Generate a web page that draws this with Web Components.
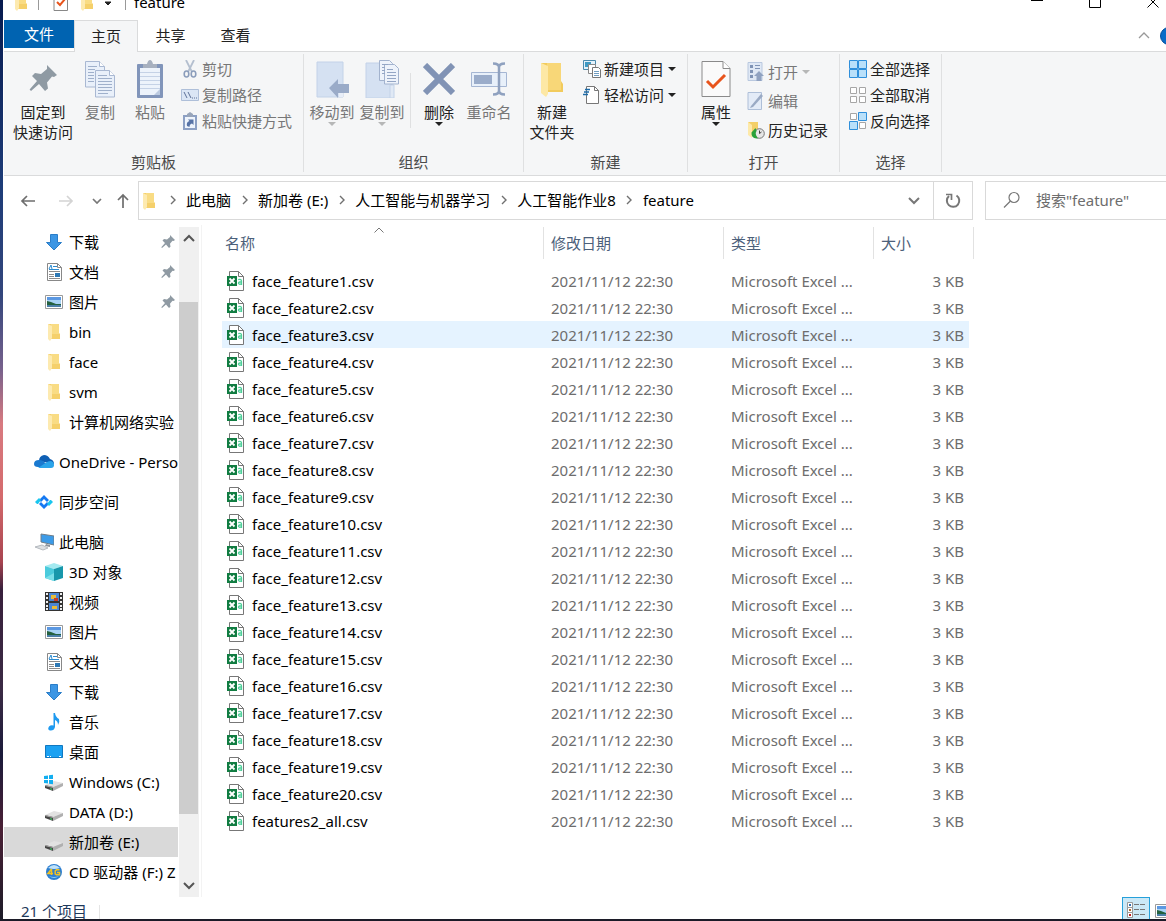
<!DOCTYPE html>
<html lang="zh-CN">
<head>
<meta charset="utf-8">
<title>feature</title>
<style>
  body {
    margin: 0;
    background: white;
    color: black;
    font-family: "Noto Sans", "Noto Sans CJK SC", sans-serif;
    font-size: 15px;
    line-height: 20px;
  }
</style>
</head>
<body>
<explorer-window></explorer-window>

<script>
  // name: [width, height, svg content]
  const folderShape = '<path d="M2 1h11v9l1 1v5H4z" fill="#f5d06b"/><path d="M5 1h8v10H5z" fill="#f9dc84"/><path d="M2 1l4 2v12l-2 3-2-2z" fill="#fdeab0"/>';
  const pinShape = '<path d="M9 0l5 5-1.500 1-1-.3-2.500 3 .5 3L8 13 5 9.500 1 13l-.7-.7L4 8 1.500 5.500 3 4l3 .5L9 2z" fill="#8f9aa3"/>';
  const driveShape = '<path d="M1 13l9-4 9 2-10 4z" fill="#e2e2e2"/><path d="M1 13l8 2v4l-8-3z" fill="#454545"/><path d="M9 15l10-4v3L9 19z" fill="#b0b0b0"/><path d="M1 13l8 2v1l-8-2z" fill="#aaa"/><path d="M6 16l2 .5V18l-2-.5z" fill="#3fae5a"/>';
  const pictureShape = '<path d="M1.500 3.500h17v13h-17z" fill="#fff" stroke="#9a9a9a"/><path d="M3 5h14v10H3z" fill="#a9d3f5"/><path d="M3 5h14v3H3z" fill="#5b98e2"/><path d="M3 9l4 1 5 2h5v1H3z" fill="#24613f"/><path d="M3 13h14v2H3z" fill="#4b7fa8"/>';
  const icons = {
    folder: [16, 18, folderShape],
    pin: [14, 14, pinShape],
    bigpin: [28, 28, `<g transform="scale(2)">${pinShape}</g>`],
    props: [16, 18, '<path d="M1 .500h13.500v17H1z" fill="#fff" stroke="#888"/><path d="M4 9l3 3 5-6" fill="none" stroke="#e8541c" stroke-width="2"/>'],
    down: [8, 8, '<path d="M1 1h6M1 4h6L4 7z" stroke="#222" fill="#222"/>'],
    min: [12, 4, '<path d="M0 0h12v1H0z"/>'],
    max: [12, 12, '<path d="M.5.5h11v11H.5z" fill="none" stroke="#000"/>'],
    close: [12, 12, '<path d="M.5.5l11 11M11.500.5l-11 11" stroke="#000"/>'],
    collapse: [12, 7, '<path d="M1 6l5-5 5 5" fill="none" stroke="#999" stroke-width="1.300"/>'],
    help: [18, 18, '<circle cx="9" cy="9" r="8.500" fill="#0a6cc8" stroke="#064f9c"/><path d="M7 7q0-2 2-2t2 2-2 3M9 12v1.500" stroke="#fff" fill="none"/>'],
    copy: [32, 38, '<g fill="#e9f0fa" stroke="#a9b8d2"><path d="M1.500 1.500h14l5 5V27h-19z"/><path d="M11.500 10.500h14l5 5V37h-19z"/><path d="M15.500 1.500v5h5M25.500 10.500v5h5" fill="#fff"/></g><path d="M4 6.500h9M4 9.500h7M4 12.500h6M4 15.500h6M4 18.500h6M4 21.500h6M14 15.500h9M14 18.500h14M14 21.500h14M14 24.500h14M14 27.500h14M14 30.500h14M14 33.500h10" stroke="#9fb0cb"/>'],
    paste: [28, 38, '<rect x="1" y="4" width="26" height="34" rx="1" fill="#8195ba"/><path d="M4 8h20v27H4z" fill="#edf3fb"/><path d="M4 12.500h20M4 16.500h20M4 20.500h20M4 24.500h20M4 28.500h20" stroke="#c5d2e6"/><path d="M7 4h4q1-4 3-4t3 4h4v4H7z" fill="#a7b0bf"/><path d="M18 35l6-6v6z" fill="#bccae0"/>'],
    cut: [18, 18, '<path d="M5 0l6 12M13 0L7 12" stroke="#b4bfcf" stroke-width="1.800"/><g fill="none" stroke="#8b9dbb" stroke-width="1.600"><ellipse cx="5.500" cy="14" rx="2.300" ry="3"/><ellipse cx="12.500" cy="14" rx="2.300" ry="3"/></g>'],
    path: [18, 12, '<path d="M.5.5h17v11H.5z" fill="#dbe6f5" stroke="#aebfd9"/><path d="M3 3l3 6M7 3l3 6M11 9h1M13 9h1M15 9h1" stroke="#5d7197"/>'],
    shortcut: [16, 18, '<path d="M1 3h14v15H1z" fill="#8ca0c4"/><path d="M3 5h10v11H3z" fill="#eef4fc"/><path d="M5 2l3-2 3 2v3H5z" fill="#98a5ba"/><path d="M5 14q-1-4 2.500-5L6 7.500h5.500V13L10 11.500Q7.500 12 7.500 15z" fill="#5773a6"/>'],
    moveto: [34, 38, '<path d="M2 2h26v35H2z" fill="#d5e1f2" stroke="#c3d2e8"/><path d="M24 24h4v13h-4z" fill="#e8eef8"/><path d="M14 28l9-9v5h11v9H23v5z" fill="#9aabc8"/>'],
    copyto: [36, 38, '<path d="M2 3h26v35H2z" fill="#d5e1f2" stroke="#c3d2e8"/><path d="M26 25h4v13h-4z" fill="#e0e9f5" stroke="#c3d2e8"/><g fill="#eef3fb" stroke="#a3b3ce"><path d="M15.500.5h10l3 3v17h-13z"/><path d="M20.500 4.500h10l4 4V24h-14z"/></g><path d="M18 4.500h6M18 7.500h3M18 10.500h3M18 13.500h3M23 9.500h6M23 12.500h9M23 15.500h9M23 18.500h9M23 21.500h9" stroke="#94a6c5"/>'],
    delete: [32, 32, '<path d="M2 2l28 28M30 2L2 30" stroke="#8193b5" stroke-width="6"/>'],
    rename: [36, 34, '<path d="M.5 10.500h35v14H.5z" fill="#e8f0fa" stroke="#a5b6d3"/><path d="M3 13h18v9H3z" fill="#9aacca"/><path d="M22 1.500q6 0 6 4v23q0 4-6 4M34 1.500q-6 0-6 4v23q0 4 6 4" fill="none" stroke="#8fa1bf" stroke-width="2.500"/>'],
    newfolder: [26, 38, '<path d="M2 3h20v18l2 3v8H8z" fill="#f2cb5c"/><path d="M8 3h14v27H8z" fill="#f8d778"/><path d="M2 3l7 3v28l-2 3-5-4z" fill="#fde8a5"/>'],
    newitem: [18, 18, '<path d="M.5.5h12v9H.5z" fill="#e4f2fb" stroke="#4b8aad"/><path d="M2 2h6v5H2z" fill="#3f9ac4"/><path d="M5.500 4.500h7v9h-7z" fill="#fff" stroke="#888"/><path d="M9.500 7.500h6l2 2v8h-8z" fill="#fff" stroke="#777"/><path d="M11 11.500h5M11 13.500h5M11 15.500h5" stroke="#6f9cc0"/>'],
    easy: [18, 18, '<path d="M3.500.5h8l4 4v13h-12z" fill="#fff" stroke="#777"/><path d="M11.500.5v4h4" fill="none" stroke="#777"/><path d="M2 3.500h5M1 6h5M0 8.500h5" stroke="#1d6ba8" stroke-width="1.400"/>'],
    bigprops: [30, 38, '<path d="M1 1.500h21l7 7v28H1z" fill="#fafafa" stroke="#8a8a8a"/><path d="M22 1.500v7h7" fill="#fff" stroke="#8a8a8a"/><path d="M6 21l6 6 12-12" fill="none" stroke="#e8541c" stroke-width="3"/>'],
    open: [18, 20, '<path d="M1 .500h14v18H1z" fill="#dfe8f5" stroke="#b9c8df"/><path d="M3 3h3v3H3zM3 8h3v3H3zM3 13h3v3H3zM8 3h5v1H8zM8 6h5v1H8z" fill="#7f93b5"/><path d="M12 9l5 5h-2.500v5h-5v-5H7z" fill="#90a2c1"/>'],
    edit: [18, 18, '<path d="M1 .500h13.500v17H1z" fill="#e3ebf7" stroke="#aebfd8"/><path d="M4 14L14 2l2 2L6 15l-3 1z" fill="#9aaac4"/>'],
    history: [18, 18, '<path d="M1 1h10v13H4z" fill="#f3cf68"/><path d="M1 1l4 3v13l-4-3z" fill="#fde9a9"/><circle cx="12.500" cy="12.500" r="4.800" fill="#e6e6e6" stroke="#777"/><path d="M12.500 9.500v3l2-1.500" stroke="#444" fill="none"/><path d="M9.500 17.500q-5.500-.5-5-6l4-4.500 1 3q-1.500 2-.5 4t2 3.500z" fill="#2aa23a"/>'],
    selall: [18, 18, '<g fill="#b9e0fa" stroke="#2f8fdb"><path d="M.5.5h8v8h-8zM9.500.5h8v8h-8zM.5 9.500h8v8h-8zM9.500 9.500h8v8h-8z"/></g>'],
    selnone: [18, 18, '<g fill="#fff" stroke="#a6a6a6"><path d="M1.500 1.500h6v6h-6zM10.500 1.500h6v6h-6zM1.500 10.500h6v6h-6zM10.500 10.500h6v6h-6z"/></g>'],
    selinv: [18, 18, '<g fill="#fff" stroke="#a6a6a6"><path d="M1.500 1.500h6v6h-6zM10.500 10.500h6v6h-6z"/></g><g fill="#b9e0fa" stroke="#2f8fdb"><path d="M9.500.5h8v8h-8zM.5 9.500h8v8h-8z"/></g>'],
    back: [16, 12, '<path d="M15 6H2M7 1L2 6l5 5" fill="none" stroke="#6e6e6e" stroke-width="1.700"/>'],
    forward: [16, 12, '<path d="M1 6h13M9 1l5 5-5 5" fill="none" stroke="#d4d4d4" stroke-width="1.700"/>'],
    recent: [10, 6, '<path d="M1 1l4 4 4-4" fill="none" stroke="#777" stroke-width="1.700"/>'],
    up: [14, 16, '<path d="M7 15V2M2 7l5-5 5 5" fill="none" stroke="#6e6e6e" stroke-width="1.700"/>'],
    crumb: [6, 10, '<path d="M1 1l4 4-4 4" fill="none" stroke="#707070" stroke-width="1.400"/>'],
    drop: [12, 8, '<path d="M1 1l5 5 5-5" fill="none" stroke="#777" stroke-width="2"/>'],
    refresh: [16, 16, '<path d="M11.500 2.500a6.200 6.200 0 1 1-7.500.5" fill="none" stroke="#777" stroke-width="2"/><path d="M1 1.500h5.500V7" fill="none" stroke="#777" stroke-width="1.700"/>'],
    search: [18, 18, '<circle cx="11" cy="6.500" r="5" fill="none" stroke="#777" stroke-width="1.200"/><path d="M7.500 10L1 16.500" stroke="#777" stroke-width="1.200"/>'],
    arrowup: [12, 8, '<path d="M1 7l5-5 5 5" fill="none" stroke="#555" stroke-width="2"/>'],
    arrowdown: [12, 8, '<path d="M1 1l5 5 5-5" fill="none" stroke="#555" stroke-width="2"/>'],
    sort: [10, 6, '<path d="M.5 5.500L5 1l4.500 4.500" fill="none" stroke="#777"/>'],
    download: [20, 20, '<path d="M6.500 2.500h7v8h4L10 18l-7.500-7.500h4z" fill="#3c96e4" stroke="#2a7dc8"/>'],
    doc: [20, 20, '<path d="M3.500 1.500h10l4 4v13h-14z" fill="#fff" stroke="#888"/><path d="M13.500 1.500v4h4" fill="none" stroke="#888"/><path d="M9 4.500h4M5 7.500h10" stroke="#2d8bd0"/><path d="M5 7l2-4 1 4" stroke="#2d8bd0" fill="none"/><path d="M5 9.500h11M5 12.500h5M5 14.500h5M5 16.500h11" stroke="#8a8a8a"/><path d="M11 11h5v4h-5z" fill="#2d78b4"/>'],
    picture: [20, 20, pictureShape],
    onedrive: [20, 20, '<path d="M5 9q0-5 5-6 4 0 6 4 4 1 4 5z" fill="#0f5fb4"/><path d="M0 12q0-4 5-4 2 0 4 1l7 6H4q-4 0-4-3z" fill="#1a79d0"/><path d="M4 16l9-6q2-1 4-1 3 1 3 4t-3 3z" fill="#2ba4ea"/>'],
    sync: [20, 20, '<path d="M5 8l5-5 5 5-2 2-3-3-3 3z" fill="#1579f2"/><path d="M15 12l-5 5-5-5 2-2 3 3 3-3z" fill="#1579f2"/><path d="M1 10l4-4 2 2-3 4H3zM19 10l-4 4-2-2 3-4h1z" fill="#1ac6ef"/>'],
    computer: [20, 20, '<path d="M7 2l13 2v9L7 10z" fill="#3c9be8" stroke="#6f7d88"/><path d="M12 12l4 1v2l-5-1z" fill="#8a929a"/><path d="M1 15l7-2 6 3-5 2z" fill="#dcdfe2" stroke="#b5babf"/>'],
    cube: [20, 20, '<path d="M10 1l9 3-9 3-9-3z" fill="#a4eaf0"/><path d="M1 4l9 3v12l-9-3z" fill="#4bcbdc"/><path d="M19 4l-9 3v12l9-3z" fill="#1797ab"/><path d="M1 16l9-5v8z" fill="#7bdfe9"/>'],
    video: [20, 20, '<path d="M1 0h18v19H1z" fill="#333"/><path d="M5 1h10v8H5zM5 11h10v7H5z" fill="#4b86d4"/><path d="M7 3h5v4H7zM8 14h5v3H8z" fill="#e8bb38"/><path d="M10 6h4v3h-4z" fill="#c43a2a"/><path d="M2 1h2v2H2zM2 5h2v2H2zM2 9h2v2H2zM2 13h2v2H2zM2 16h2v2H2zM16 1h2v2h-2zM16 5h2v2h-2zM16 9h2v2h-2zM16 13h2v2h-2zM16 16h2v2h-2z" fill="#eee"/>'],
    music: [20, 20, '<path d="M9.500 1h1.500q.5 4 4 6 1 3-1 6 0-4-3-5v7q-1 4-5 3.500-3-1-1-4 2-2 4.500-1z" fill="#1e9af0"/>'],
    desktop: [20, 20, '<path d="M1.500 3.500h17v12h-17z" fill="#1ba1f2" stroke="#1178c0"/><path d="M3 14.500h2M6 14.500h1M15 14.500h2" stroke="#fff"/>'],
    winDrive: [20, 20, `${driveShape}<path d="M0 4l4-.5V7H0zM5 3.300l4-.5V7H5zM0 8h4v3.500l-4-.5zM5 8h4v4.200l-4-.5z" fill="#12aef0"/>`],
    drive: [20, 20, driveShape],
    cd: [20, 20, '<circle cx="10" cy="10" r="8" fill="#2d7fd0"/><path d="M4 6q6-6 12 0-6 2-12 0z" fill="#bfe2fa"/><path d="M5 14q5 4 10 0-5 2-10 0z" fill="#8fd0f5"/><path d="M7.500 7L4 11.500h5M7.500 7v6M15.500 7.800h-3l-1.300 1v3l1.300 1h3v-2.300H13" stroke="#f4c220" stroke-width="1.500" fill="none"/>'],
    csv: [20, 20, '<path d="M3.500.5h9l5 5v14h-14z" fill="#fff" stroke="#777"/><path d="M12.500.5v5h5" fill="none" stroke="#777"/><path d="M1 5h10v10H1z" fill="#107c41"/><path d="M3.500 7.500l5 5M8.500 7.500l-5 5" stroke="#fff" stroke-width="1.800"/><path d="M12.200 8.700q3.300-1 3.300 1.300v4M15.500 11h-1.700q-1.500.2-1.300 1.500 1 1.500 3 0" fill="none" stroke="#4fd09a" stroke-width="1.300"/>'],
    details: [18, 18, '<path d="M.5.500h5v5h-5zM.5 5.500h5v5h-5zM.5 10.500h5v5h-5z" fill="#fff" stroke="#999"/><path d="M2 2h2v2H2z" fill="#3070b0"/><path d="M2 7h2v2H2z" fill="#b06a30"/><path d="M2 12h2v2H2z" fill="#c02020"/><path d="M7 2.500h5M13 2.500h5M7 7.500h5M13 7.500h5M7 12.500h5M13 12.500h5" stroke="#777"/>']
  };

  class UiIcon extends HTMLElement {
    constructor() {
      super();
      this.attachShadow({ mode: 'open' });
    }

    connectedCallback() {
      const [w, h, shape] = icons[this.getAttribute('name')];
      this.shadowRoot.innerHTML = `
        <style>
          :host { display: inline-flex; flex: none; align-items: center; justify-content: center; }
          svg { display: block; }
        </style>
        <svg width="${w}" height="${h}" viewBox="0 0 ${w} ${h}" aria-hidden="true">${shape}</svg>`;
    }
  }
  customElements.define('ui-icon', UiIcon);

  class TitleBar extends HTMLElement {
    constructor() {
      super();
      this.attachShadow({ mode: 'open' }).innerHTML = `
        <style>
          :host { display: flex; align-items: flex-end; height: 20px; overflow: hidden; }
          .bar { display: flex; flex: 1; align-items: center; height: 36px; }
          button { display: flex; justify-content: center; border: 0; padding: 0; background: none; }
          .folder { width: 34px; }
          .props { width: 44px; }
          .new { width: 8px; }
          .more { width: 34px; }
          i { width: 1px; height: 16px; background: #999; }
          .name { flex: 1; padding-left: 8px; line-height: 16px; }
          .controls { display: flex; align-items: center; gap: 46px; padding-right: 7px; }
        </style>
        <div class="bar">
          <ui-icon class="folder" name="folder"></ui-icon><i></i>
          <button class="props" aria-label="属性"><ui-icon name="props"></ui-icon></button>
          <button class="new" aria-label="新建文件夹"><ui-icon name="folder"></ui-icon></button>
          <button class="more" aria-label="自定义"><ui-icon name="down"></ui-icon></button><i></i>
          <span class="name">feature</span>
          <div class="controls">
            <button aria-label="最小化"><ui-icon name="min"></ui-icon></button>
            <button aria-label="最大化"><ui-icon name="max"></ui-icon></button>
            <button aria-label="关闭"><ui-icon name="close"></ui-icon></button>
          </div>
        </div>`;
    }
  }
  customElements.define('title-bar', TitleBar);

  class RibbonTabs extends HTMLElement {
    constructor() {
      super();
      this.attachShadow({ mode: 'open' }).innerHTML = `
        <style>
          :host { display: flex; height: 31px; border-bottom: 1px solid #dadbdc; }
          button { font: inherit; line-height: 20px; color: #222; border: 0; padding: 0 0 2px; background: none; width: 65px; }
          .file { width: 70px; height: 28px; padding: 0; background: #0063b1; color: white; }
          .active { background: #f5f6f7; border: 1px solid #dadbdc; border-bottom: 0; height: 32px; width: 64px; }
          .end { display: flex; flex: 1; justify-content: flex-end; align-items: center; gap: 10px; overflow: hidden; }
          .end button { display: flex; width: auto; padding: 0; }
          .end .help { margin-right: -12px; }
        </style>
        <button class="file">文件</button>
        <button class="active">主页</button>
        <button>共享</button>
        <button>查看</button>
        <div class="end">
          <button aria-label="折叠功能区"><ui-icon name="collapse"></ui-icon></button>
          <button class="help" aria-label="帮助"><ui-icon name="help"></ui-icon></button>
        </div>`;
    }
  }
  customElements.define('ribbon-tabs', RibbonTabs);

  class RibbonGroup extends HTMLElement {
    constructor() {
      super();
      this.attachShadow({ mode: 'open' }).innerHTML = `
        <style>
          :host { display: flex; flex-direction: column; margin: 2px 0 3px; border-right: 1px solid #dfe0e1; }
          .items { display: flex; flex: 1; padding: 0 9px 0 3px; }
          .label { text-align: center; color: #4a4a4a; }
        </style>
        <div class="items"><slot></slot></div>
        <div class="label">${this.getAttribute('label')}</div>`;
    }
  }

  // large button: icon above the label; attributes: icon, arrow, disabled
  class RibbonLarge extends HTMLElement {
    constructor() {
      super();
      const arrow = this.hasAttribute('arrow') ? '<div class="arrow"></div>' : '';
      this.attachShadow({ mode: 'open' }).innerHTML = `
        <style>
          :host { display: block; width: 50px; color: #222; }
          :host([wide]) { width: 64px; margin-left: 4px; }
          :host([disabled]) { color: #777; }
          button { display: flex; flex-direction: column; align-items: center; width: 100%; padding: 5px 0 0; border: 0; background: none; font: inherit; color: inherit; }
          ui-icon { height: 40px; margin-bottom: 3px; }
          span { white-space: nowrap; }
          .arrow { border: 4px solid transparent; border-top-color: currentColor; border-bottom: 0; }
          :host([disabled]) .arrow { opacity: .5; }
        </style>
        <button ${this.hasAttribute('disabled') ? 'disabled' : ''}>
          <ui-icon name="${this.getAttribute('icon')}"></ui-icon>
          <span><slot></slot></span>
          ${arrow}
        </button>`;
    }
  }

  class RibbonSmall extends HTMLElement {
    constructor() {
      super();
      const arrow = this.hasAttribute('arrow') ? '<i></i>' : '';
      this.attachShadow({ mode: 'open' }).innerHTML = `
        <style>
          :host { display: block; color: #222; }
          :host([disabled]) { color: #777; }
          button { display: flex; align-items: center; gap: 3px; height: 100%; padding: 0 2px 0 0; border: 0; background: none; font: inherit; color: inherit; white-space: nowrap; }
          ui-icon { width: 18px; }
          i { margin-left: 1px; border: 4px solid transparent; border-top-color: currentColor; border-bottom: 0; }
          :host([disabled]) i { opacity: .5; }
        </style>
        <button ${this.hasAttribute('disabled') ? 'disabled' : ''}>
          <ui-icon name="${this.getAttribute('icon')}"></ui-icon>
          <slot></slot>${arrow}
        </button>`;
    }
  }

  class RibbonColumn extends HTMLElement {
    constructor() {
      super();
      this.attachShadow({ mode: 'open' }).innerHTML = `
        <style>
          :host { display: grid; grid-auto-rows: 26px; align-content: start; padding: 2px 0 0 6px; }
          :host([spread]) { grid-auto-rows: 29px; padding-top: 3px; }
        </style>
        <slot></slot>`;
    }
  }
  customElements.define('ribbon-group', RibbonGroup);
  customElements.define('ribbon-large', RibbonLarge);
  customElements.define('ribbon-small', RibbonSmall);
  customElements.define('ribbon-column', RibbonColumn);

  class RibbonPanel extends HTMLElement {
    constructor() {
      super();
      this.attachShadow({ mode: 'open' }).innerHTML = `
        <style>
          :host { display: flex; height: 123px; background: #f5f6f7; border-bottom: 1px solid #dadbdc; }
          hr { width: 1px; height: 55px; margin: 19px 3px 0; border: 0; background: #dfe0e1; }
        </style>
        <ribbon-group label="剪贴板">
          <ribbon-large icon="bigpin" wide>固定到<br>快速访问</ribbon-large>
          <ribbon-large icon="copy" disabled>复制</ribbon-large>
          <ribbon-large icon="paste" disabled>粘贴</ribbon-large>
          <ribbon-column>
            <ribbon-small icon="cut" disabled>剪切</ribbon-small>
            <ribbon-small icon="path" disabled>复制路径</ribbon-small>
            <ribbon-small icon="shortcut" disabled>粘贴快捷方式</ribbon-small>
          </ribbon-column>
        </ribbon-group>
        <ribbon-group label="组织">
          <ribbon-large icon="moveto" arrow disabled>移动到</ribbon-large>
          <ribbon-large icon="copyto" arrow disabled>复制到</ribbon-large>
          <hr>
          <ribbon-large icon="delete" arrow>删除</ribbon-large>
          <ribbon-large icon="rename" disabled>重命名</ribbon-large>
        </ribbon-group>
        <ribbon-group label="新建">
          <ribbon-large icon="newfolder">新建<br>文件夹</ribbon-large>
          <ribbon-column>
            <ribbon-small icon="newitem" arrow>新建项目</ribbon-small>
            <ribbon-small icon="easy" arrow>轻松访问</ribbon-small>
          </ribbon-column>
        </ribbon-group>
        <ribbon-group label="打开">
          <ribbon-large icon="bigprops" arrow>属性</ribbon-large>
          <ribbon-column spread>
            <ribbon-small icon="open" arrow disabled>打开</ribbon-small>
            <ribbon-small icon="edit" disabled>编辑</ribbon-small>
            <ribbon-small icon="history">历史记录</ribbon-small>
          </ribbon-column>
        </ribbon-group>
        <ribbon-group label="选择">
          <ribbon-column>
            <ribbon-small icon="selall">全部选择</ribbon-small>
            <ribbon-small icon="selnone">全部取消</ribbon-small>
            <ribbon-small icon="selinv">反向选择</ribbon-small>
          </ribbon-column>
        </ribbon-group>`;
    }
  }
  customElements.define('ribbon-panel', RibbonPanel);

  class AddressBar extends HTMLElement {
    constructor() {
      super();
      const crumbs = ['此电脑', '新加卷 (E:)', '人工智能与机器学习', '人工智能作业8', 'feature'];
      this.attachShadow({ mode: 'open' }).innerHTML = `
        <style>
          :host { display: flex; padding: 5px 0 5px 7px; }
          button { display: flex; align-items: center; justify-content: center; border: 0; padding: 0; background: none; }
          .nav { display: grid; grid-template-columns: 34px 42px 20px 31px; }
          .box { display: flex; flex: 1; box-sizing: border-box; height: 39px; border: 1px solid #d9d9d9; }
          .box > ui-icon { width: 20px; }
          nav { display: flex; flex: 1; align-items: center; padding-bottom: 2px; }
          nav ui-icon { width: 27px; }
          a { color: inherit; text-decoration: none; white-space: nowrap; }
          .drop { width: 38px; }
          .refresh { width: 39px; border-left: 1px solid #d9d9d9; }
          label { display: flex; align-items: center; gap: 15px; box-sizing: border-box; width: 181px; margin-left: 12px; padding: 0 0 2px 17px; border: 1px solid #d9d9d9; border-right: 0; }
          input { flex: 1; min-width: 0; border: 0; padding: 0; background: none; font: inherit; outline: 0; }
          input::placeholder { color: #6d6d6d; opacity: 1; }
        </style>
        <div class="nav">
          <button aria-label="后退"><ui-icon name="back"></ui-icon></button>
          <button aria-label="前进" disabled><ui-icon name="forward"></ui-icon></button>
          <button aria-label="最近"><ui-icon name="recent"></ui-icon></button>
          <button aria-label="向上"><ui-icon name="up"></ui-icon></button>
        </div>
        <div class="box">
          <ui-icon name="folder"></ui-icon>
          <nav>${crumbs.map(c => `<ui-icon name="crumb"></ui-icon><a href="#">${c}</a>`).join('')}</nav>
          <button class="drop" aria-label="以前的位置"><ui-icon name="drop"></ui-icon></button>
          <button class="refresh" aria-label="刷新"><ui-icon name="refresh"></ui-icon></button>
        </div>
        <label aria-label="搜索"><ui-icon name="search"></ui-icon><input type="text" placeholder='搜索"feature"'></label>`;
    }
  }
  customElements.define('address-bar', AddressBar);

  class NavItem extends HTMLElement {
    constructor() {
      super();
      const pin = this.hasAttribute('pinned') ? '<ui-icon class="pin" name="pin"></ui-icon>' : '';
      this.attachShadow({ mode: 'open' }).innerHTML = `
        <style>
          :host { display: block; }
          :host([root]) { margin-top: 10px; }
          a { display: flex; align-items: center; gap: 5px; height: 30px; padding-left: 40px; overflow: hidden; color: black; text-decoration: none; white-space: nowrap; }
          :host([root]) a { padding-left: 30px; }
          :host([selected]) a { background: #d9d9d9; }
          .main { width: 20px; }
          .pin { margin: 0 3px 0 auto; }
        </style>
        <a href="#"><ui-icon class="main" name="${this.getAttribute('icon')}"></ui-icon><slot></slot>${pin}</a>`;
    }
  }
  customElements.define('nav-item', NavItem);

  class NavPane extends HTMLElement {
    constructor() {
      super();
      this.attachShadow({ mode: 'open' }).innerHTML = `
        <style>
          :host { display: flex; flex: none; width: 197px; border-right: 1px solid #f3f3f3; }
          nav { flex: 1; min-width: 0; padding: 2px 1px 10px 0; }
          .scroll { display: flex; flex-direction: column; width: 20px; margin: 2px 2px 0 0; background: #f0f0f0; }
          .scroll button { display: flex; justify-content: center; align-items: center; height: 22px; border: 0; padding: 0; background: none; }
          .before { flex: 53; }
          .thumb { flex: 512; margin-right: 1px; background: #cdcdcd; }
          .after { flex: 61; }
        </style>
        <nav>
          <nav-item icon="download" pinned>下载</nav-item>
          <nav-item icon="doc" pinned>文档</nav-item>
          <nav-item icon="picture" pinned>图片</nav-item>
          <nav-item icon="folder">bin</nav-item>
          <nav-item icon="folder">face</nav-item>
          <nav-item icon="folder">svm</nav-item>
          <nav-item icon="folder">计算机网络实验</nav-item>
          <nav-item icon="onedrive" root>OneDrive - Personal</nav-item>
          <nav-item icon="sync" root>同步空间</nav-item>
          <nav-item icon="computer" root>此电脑</nav-item>
          <nav-item icon="cube">3D 对象</nav-item>
          <nav-item icon="video">视频</nav-item>
          <nav-item icon="picture">图片</nav-item>
          <nav-item icon="doc">文档</nav-item>
          <nav-item icon="download">下载</nav-item>
          <nav-item icon="music">音乐</nav-item>
          <nav-item icon="desktop">桌面</nav-item>
          <nav-item icon="winDrive">Windows (C:)</nav-item>
          <nav-item icon="drive">DATA (D:)</nav-item>
          <nav-item icon="drive" selected>新加卷 (E:)</nav-item>
          <nav-item icon="cd">CD 驱动器 (F:) Z</nav-item>
        </nav>
        <div class="scroll">
          <button aria-label="向上滚动"><ui-icon name="arrowup"></ui-icon></button>
          <div class="before"></div>
          <div class="thumb"></div>
          <div class="after"></div>
          <button aria-label="向下滚动"><ui-icon name="arrowdown"></ui-icon></button>
        </div>`;
    }
  }
  customElements.define('nav-pane', NavPane);

  class FileList extends HTMLElement {
    constructor() {
      super();
      const files = [];
      for (let i = 1; i <= 20; i++) {
        files.push(`face_feature${i}.csv`);
      }
      files.push('features2_all.csv');

      const rows = files.map((file, i) => `
        <tr class="${i === 2 ? 'hover' : ''}">
          <td><div class="file"><ui-icon name="csv"></ui-icon>${file}</div></td>
          <td>2021/11/12 22:30</td>
          <td>Microsoft Excel ...</td>
          <td>3 KB</td>
        </tr>`).join('');

      this.attachShadow({ mode: 'open' }).innerHTML = `
        <style>
          :host { display: block; flex: 1; padding: 2px 0 0 20px; }
          table { table-layout: fixed; width: 752px; border-collapse: separate; border-spacing: 0; }
          th { position: relative; height: 32px; box-sizing: border-box; padding: 0 7px; border-right: 1px solid #e2e2e2; font-weight: normal; text-align: left; color: #4c607a; }
          th:first-child { padding-left: 3px; }
          th ui-icon { position: absolute; top: 0; left: 49%; transform: translateX(-50%); }
          tbody::before { content: ""; display: block; height: 8px; }
          td { height: 27px; padding: 0 7px; color: #6d6d6d; white-space: nowrap; }
          td:first-child { padding-left: 4px; color: black; }
          td:last-child { padding-right: 5px; border-right: 5px solid transparent; background-clip: padding-box; text-align: right; }
          .hover td { background-color: #e5f3ff; }
          .file { display: flex; align-items: center; gap: 6px; }
        </style>
        <table>
          <colgroup><col style="width: 322px"><col style="width: 180px"><col style="width: 150px"><col style="width: 100px"></colgroup>
          <thead>
            <tr><th>名称<ui-icon name="sort"></ui-icon></th><th>修改日期</th><th>类型</th><th>大小</th></tr>
          </thead>
          <tbody>${rows}</tbody>
        </table>`;
    }
  }
  customElements.define('file-list', FileList);

  class StatusBar extends HTMLElement {
    constructor() {
      super();
      this.attachShadow({ mode: 'open' }).innerHTML = `
        <style>
          :host { display: flex; align-items: flex-start; height: 22px; overflow: hidden; color: #1e395b; }
          .count { padding: 6px 12px 0 17px; line-height: 16px; }
          i { width: 1px; height: 14px; margin-top: 8px; background: #e5e5e5; }
          .views { display: flex; flex: 1; justify-content: flex-end; margin-right: -12px; }
          button { display: flex; justify-content: center; align-items: center; box-sizing: border-box; width: 28px; height: 28px; border: 0; padding: 0; background: none; }
          .on { border: 1px solid #26a0da; background: #cbe8f6; }
        </style>
        <span class="count">21 个项目</span><i></i>
        <div class="views">
          <button class="on" aria-label="详细信息"><ui-icon name="details"></ui-icon></button>
          <button aria-label="大缩略图"><ui-icon name="picture"></ui-icon></button>
        </div>`;
    }
  }
  customElements.define('status-bar', StatusBar);

  class ExplorerWindow extends HTMLElement {
    constructor() {
      super();
      this.attachShadow({ mode: 'open' }).innerHTML = `
        <style>
          /* the desktop shows along the left and bottom edges */
          :host {
            display: flex; box-sizing: border-box; min-height: 100vh; overflow: hidden; padding: 0 0 2px 3px;
            background: linear-gradient(#071a4e, #1d3c78 20%, #33467c 32%, #76618c 40%, #d87a80 46%, #d46a6c 54%, #a84450 61%, #38203c 64%, #3a2a44 75%, #1a1a3a 82%, #4a2035 90%, #1b1b28);
          }
          .window { display: flex; flex: 1; min-width: 0; flex-direction: column; padding-left: 1px; background: white; }
          .main { display: flex; flex: 1; }
        </style>
        <div class="window">
          <title-bar></title-bar>
          <ribbon-tabs></ribbon-tabs>
          <ribbon-panel></ribbon-panel>
          <address-bar></address-bar>
          <div class="main">
            <nav-pane></nav-pane>
            <file-list></file-list>
          </div>
          <status-bar></status-bar>
        </div>`;
    }
  }
  customElements.define('explorer-window', ExplorerWindow);
</script>
</body>
</html>
